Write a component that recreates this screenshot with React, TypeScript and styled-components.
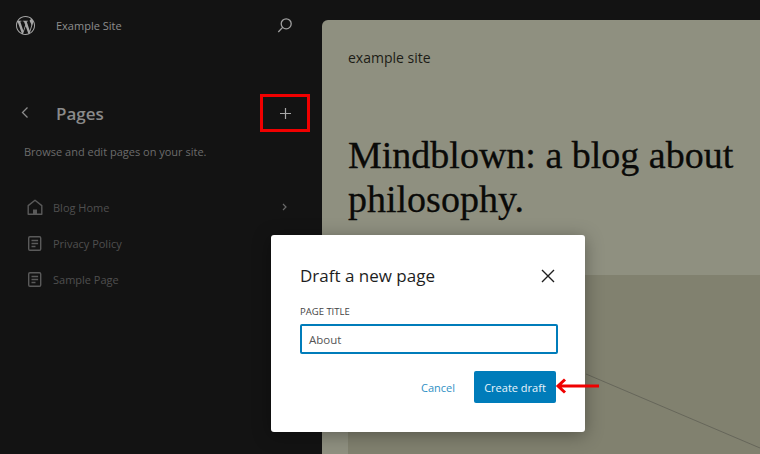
import { createGlobalStyle, styled } from "styled-components";
import { SiWordpress } from "react-icons/si";

const GlobalStyle = createGlobalStyle`
	* {
		box-sizing: border-box;
	}

	html, body {
		margin: 0;
		padding: 0;
		background: #131313;
	}

	body {
		font-family: "Open Sans", "Noto Sans", sans-serif;
	}
`;

function PageIcon() {
	return (
		<svg width="16" height="17" viewBox="0 0 16 17" fill="none" stroke="currentColor" strokeWidth="1.4">
			<rect x="1.7" y="1.7" width="12" height="13.6" rx="1.2" />
			<path d="M4.5 5.5h6.6M4.5 8.5h6.6M4.5 11.5h4" />
		</svg>
	);
}

function HomeIcon() {
	return (
		<svg width="16" height="17" viewBox="0 0 16 17" fill="none" stroke="currentColor" strokeWidth="1.4">
			<path d="M1.2 15.2V6.6L8 1.2l6.8 5.4v8.6z" strokeLinejoin="round" />
			<path d="M6 15.2V10.5h4v4.7z" fill="currentColor" stroke="none" />
		</svg>
	);
}

const pages = [
	{ title: "Blog Home", home: true },
	{ title: "Privacy Policy", home: false },
	{ title: "Sample Page", home: false },
];

export default function App() {
	return (
		<>
			<GlobalStyle />
			<Screen>
				<Sidebar>
					<TopBar>
						<Logo>
							<SiWordpress size={19} />
						</Logo>
						<SiteName>Example Site</SiteName>
						<SearchButton>
							<svg width="16" height="17" viewBox="0 0 16 17" fill="none" stroke="currentColor" strokeWidth="1.3">
								<circle cx="9.2" cy="6.8" r="5" />
								<path d="M5.6 10.4L1.3 15" />
							</svg>
						</SearchButton>
					</TopBar>

					<TitleRow>
						<BackButton>
							<svg width="8" height="12" viewBox="0 0 8 12" fill="none" stroke="currentColor" strokeWidth="1.3">
								<path d="M6.5 0.5L1.5 5.5l5 5" />
							</svg>
						</BackButton>
						<PageHeading>Pages</PageHeading>
						<AddButton>
							<svg width="11" height="11" viewBox="0 0 11 11" fill="none" stroke="currentColor" strokeWidth="1.2">
								<path d="M5.5 0v11M0 5.5h11" />
							</svg>
							<RedBox />
						</AddButton>
					</TitleRow>

					<Description>Browse and edit pages on your site.</Description>

					<PageList>
						{pages.map(page => (
							<PageRow key={page.title}>
								<RowIcon>{page.home ? <HomeIcon /> : <PageIcon />}</RowIcon>
								<RowLabel>{page.title}</RowLabel>
								{page.home && (
									<RowChevron>
										<svg width="5" height="8" viewBox="0 0 5 8" fill="none" stroke="currentColor" strokeWidth="1.2">
											<path d="M1 1l3 3-3 3" />
										</svg>
									</RowChevron>
								)}
							</PageRow>
						))}
					</PageList>
				</Sidebar>

				<Preview>
					<PreviewSite>example site</PreviewSite>
					<PreviewTitle>Mindblown: a blog about philosophy.</PreviewTitle>
					<PreviewImage>
						<svg width="412" height="179" viewBox="0 0 412 179" fill="none">
							<path d="M238 99L412 173" stroke="#66665a" strokeWidth="1" />
						</svg>
					</PreviewImage>
				</Preview>

				<Modal>
					<ModalHeader>
						<ModalTitle>Draft a new page</ModalTitle>
						<CloseButton>
							<svg width="14" height="14" viewBox="0 0 14 14" fill="none" stroke="currentColor" strokeWidth="1.4">
								<path d="M1 1l12 12M13 1L1 13" />
							</svg>
						</CloseButton>
					</ModalHeader>
					<FieldLabel>PAGE TITLE</FieldLabel>
					<TitleInput>About</TitleInput>
					<ModalActions>
						<CancelButton>Cancel</CancelButton>
						<CreateButton>
							Create draft
							<Arrow>
								<svg width="44" height="18" viewBox="0 0 44 18" fill="none" stroke="#f00000" strokeWidth="3">
									<path d="M44 9H3M10 2.5L3 9l7 6.5" />
								</svg>
							</Arrow>
						</CreateButton>
					</ModalActions>
				</Modal>
			</Screen>
		</>
	);
}

const Screen = styled.div`
	position: relative;
	width: 760px;
	height: 454px;
	display: flex;
	overflow: hidden;
	background: #131313;
`;

const Sidebar = styled.aside`
	width: 322px;
	flex-shrink: 0;
	display: flex;
	flex-direction: column;
`;

const TopBar = styled.div`
	height: 51px;
	display: flex;
	align-items: center;
	padding: 0 29px 0 16px;
`;

const Logo = styled.div`
	width: 40px;
	display: flex;
	color: #a6a6a6;
`;

const SiteName = styled.span`
	flex: 1;
	font-size: 11px;
	color: #8e8e8e;
`;

const SearchButton = styled.div`
	display: flex;
	color: #a0a0a0;
`;

const TitleRow = styled.div`
	height: 38px;
	margin-top: 43px;
	display: flex;
	align-items: center;
	padding-left: 21px;
`;

const BackButton = styled.div`
	width: 35px;
	display: flex;
	color: #8c8c8c;
`;

const PageHeading = styled.h1`
	flex: 1;
	margin: 0;
	font-size: 17px;
	font-weight: 600;
	color: #8a8a8a;
`;

const AddButton = styled.div`
	position: relative;
	width: 50px;
	height: 38px;
	margin-right: 12px;
	display: flex;
	align-items: center;
	justify-content: center;
	color: #a8a8a8;
`;

const RedBox = styled.div`
	position: absolute;
	inset: 0;
	border: 3px solid #f00000;
`;

const Description = styled.p`
	margin: 12px 0 0 24px;
	font-size: 11px;
	line-height: 16px;
	color: #6c6c6c;
`;

const PageList = styled.div`
	margin-top: 29px;
	display: flex;
	flex-direction: column;
	padding: 0 35px 0 27px;
`;

const PageRow = styled.div`
	height: 36px;
	display: flex;
	align-items: center;
`;

const RowIcon = styled.div`
	width: 26px;
	display: flex;
	color: #5a5a5a;
`;

const RowLabel = styled.span`
	flex: 1;
	font-size: 11px;
	color: #4f4f4f;
`;

const RowChevron = styled.div`
	display: flex;
	color: #6a6a6a;
`;

const Preview = styled.main`
	flex: 1;
	margin-top: 20px;
	display: flex;
	flex-direction: column;
	background: #8f9080;
	border-top-left-radius: 6px;
`;

const PreviewSite = styled.div`
	margin: 28px 0 0 26px;
	font-size: 14px;
	line-height: 20px;
	color: #1c1c16;
`;

const PreviewTitle = styled.h2`
	margin: 65px 0 0 26px;
	width: 400px;
	font-family: "Liberation Serif", serif;
	font-size: 38px;
	line-height: 44px;
	font-weight: 400;
	color: #0a0a08;
	-webkit-text-stroke: 0.3px #0a0a08;
`;

const PreviewImage = styled.div`
	flex: 1;
	margin: 54px 0 0 26px;
	background: #81816f;
`;

const Modal = styled.div`
	position: absolute;
	left: 271px;
	top: 235px;
	width: 314px;
	height: 197px;
	padding: 29px 27px 0 29px;
	display: flex;
	flex-direction: column;
	background: #fff;
	border-radius: 3px;
	box-shadow: 0 3px 18px rgba(0, 0, 0, 0.35);
`;

const ModalHeader = styled.div`
	display: flex;
	align-items: center;
	justify-content: space-between;
	height: 23px;
`;

const ModalTitle = styled.h3`
	margin: 0;
	font-size: 17px;
	font-weight: 400;
	color: #1e1e1e;
`;

const CloseButton = styled.div`
	display: flex;
	margin-right: 3px;
	color: #1e1e1e;
`;

const FieldLabel = styled.div`
	margin-top: 18px;
	font-size: 9.5px;
	font-weight: 500;
	line-height: 14px;
	color: #444;
`;

const TitleInput = styled.div`
	margin-top: 5px;
	height: 30px;
	display: flex;
	align-items: center;
	padding: 0 7px;
	font-size: 11.5px;
	color: #555;
	border: 2px solid #007cba;
	border-radius: 2px;
`;

const ModalActions = styled.div`
	margin-top: 17px;
	display: flex;
	align-items: center;
	justify-content: flex-end;
	gap: 19px;
	padding-right: 2px;
`;

const CancelButton = styled.span`
	font-size: 11px;
	color: #2f90c4;
`;

const CreateButton = styled.div`
	position: relative;
	width: 82px;
	height: 32px;
	display: flex;
	align-items: center;
	justify-content: center;
	font-size: 11px;
	color: #eaf4fa;
	background: #007cba;
	border-radius: 2px;
`;

const Arrow = styled.div`
	position: absolute;
	left: 81px;
	top: 6px;
	display: flex;
`;
